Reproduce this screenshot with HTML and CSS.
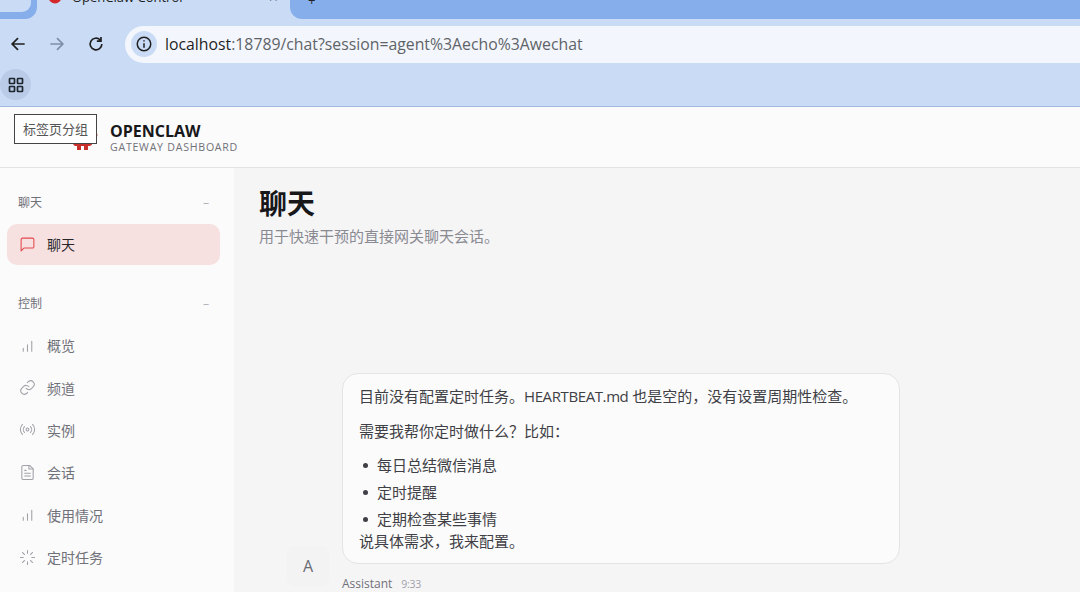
FILE: index.html
```html
<!DOCTYPE html>
<html lang="zh-CN">
<head>
<meta charset="utf-8">
<title>OpenClaw Control</title>
<link rel="stylesheet" href="styles.css">
</head>
<body>
<div class="browser">
  <div class="tabstrip">
    <div class="corner-tab"><div class="corner-inner"></div></div>
    <div class="active-tab">
      <svg class="favicon" viewBox="0 0 16 16"><circle cx="8" cy="8" r="6.500" fill="#d5282b"/></svg>
      <span class="tab-title">OpenClaw Control</span>
      <span class="tab-close">×</span>
    </div>
    <div class="other-tab"><span class="tab-plus">+</span></div>
  </div>
  <div class="toolbar">
    <button class="nav-btn"><svg viewBox="0 0 24 24" class="nav-ico"><path d="M20 12H5M12 5l-7 7 7 7"/></svg></button>
    <button class="nav-btn dim"><svg viewBox="0 0 24 24" class="nav-ico"><path d="M4 12h15M12 5l7 7-7 7"/></svg></button>
    <button class="nav-btn"><svg viewBox="0 0 24 24" class="nav-ico"><path d="M19 12a7 7 0 1 1-2.100-5M18 3.500V8.500H13"/></svg></button>
    <div class="omnibox">
      <span class="site-info"><svg viewBox="0 0 24 24" class="info-ico"><circle cx="12" cy="12" r="9"/><path d="M12 11v6M12 7v1.600"/></svg></span>
      <span class="url"><span class="host">localhost</span>:18789/chat?session=agent%3Aecho%3Awechat</span>
    </div>
  </div>
  <div class="bookmarks">
    <span class="group-btn"><svg viewBox="0 0 16 16" class="grid-ico"><rect x="1.500" y="1.500" width="5" height="5" rx=".6"/><rect x="9.500" y="1.500" width="5" height="5" rx=".6"/><rect x="1.500" y="9.500" width="5" height="5" rx=".6"/><rect x="9.500" y="9.500" width="5" height="5" rx=".6"/></svg></span>
  </div>
</div>
<header class="topbar">
  <svg class="logo" viewBox="0 0 30 30"><path d="M4 10C4 5 9 2 15 2s11 3 11 8v8c0 3-2 6-4 7l-2 0v4h-4v-4h-3v4H9v-4l-2 0c-2-1-3-4-3-7z" fill="#c9302c"/><circle cx="28.500" cy="14" r="1.500" fill="#e8a5a3"/></svg>
  <div class="brand">
    <div class="brand-name">OPENCLAW</div>
    <div class="brand-sub">GATEWAY DASHBOARD</div>
  </div>
  <div class="tooltip">标签页分组</div>
</header>
<div class="shell">
  <aside class="sidebar">
    <div class="nav-group first"><span>聊天</span><span class="minus">−</span></div>
    <a class="nav-item active">
      <svg viewBox="0 0 24 24" class="ico"><path d="M21 15a2 2 0 0 1-2 2H7l-4 4V5a2 2 0 0 1 2-2h14a2 2 0 0 1 2 2z"/></svg>
      <span>聊天</span>
    </a>
    <div class="nav-group"><span>控制</span><span class="minus">−</span></div>
    <a class="nav-item"><svg viewBox="0 0 24 24" class="ico"><path d="M18 20V6M12 20v-9M6 20v-4"/></svg><span>概览</span></a>
    <a class="nav-item"><svg viewBox="0 0 24 24" class="ico"><path d="M10 13a5 5 0 0 0 7.500.5l3-3a5 5 0 0 0-7-7l-1.700 1.700"/><path d="M14 11a5 5 0 0 0-7.500-.5l-3 3a5 5 0 0 0 7 7l1.700-1.700"/></svg><span>频道</span></a>
    <a class="nav-item"><svg viewBox="0 0 24 24" class="ico"><path d="M4.900 19.100a10 10 0 0 1 0-14.200M7.800 16.200a6 6 0 0 1 0-8.400M16.200 7.800a6 6 0 0 1 0 8.400M19.100 4.900a10 10 0 0 1 0 14.200"/><circle cx="12" cy="12" r="2"/></svg><span>实例</span></a>
    <a class="nav-item"><svg viewBox="0 0 24 24" class="ico"><path d="M15 2H6a2 2 0 0 0-2 2v16a2 2 0 0 0 2 2h12a2 2 0 0 0 2-2V7z"/><path d="M14 2v5h6M16 13H8M16 17H8M10 9H8"/></svg><span>会话</span></a>
    <a class="nav-item"><svg viewBox="0 0 24 24" class="ico"><path d="M18 20V6M12 20v-9M6 20v-4"/></svg><span>使用情况</span></a>
    <a class="nav-item"><svg viewBox="0 0 24 24" class="ico"><path d="M12 2v4M12 18v4M4.900 4.900l2.900 2.900M16.200 16.200l2.900 2.900M2 12h4M18 12h4M4.900 19.100l2.900-2.900M16.200 7.800l2.900-2.900"/></svg><span>定时任务</span></a>
  </aside>
  <main class="content">
    <h1 class="page-title">聊天</h1>
    <p class="page-sub">用于快速干预的直接网关聊天会话。</p>
    <div class="chat-group">
      <div class="avatar">A</div>
      <div class="chat-col">
        <div class="bubble">
          <p class="first-p">目前没有配置定时任务。<span class="latin">HEARTBEAT.md</span> 也是空的&#xFF0C;没有设置周期性检查。</p>
          <p>需要我帮你定时做什么&#xFF1F;比如&#xFF1A;</p>
          <ul>
            <li>每日总结微信消息</li>
            <li>定时提醒</li>
            <li>定期检查某些事情</li>
          </ul>
          <p class="last">说具体需求&#xFF0C;我来配置。</p>
        </div>
        <div class="meta"><span class="sender">Assistant</span><span class="time">9:33</span></div>
      </div>
    </div>
  </main>
</div>
</body>
</html>
```
FILE: styles.css
```css
* { box-sizing: border-box; }
html, body { margin: 0; height: 592px; overflow: hidden; }
body {
  font-family: "Open Sans", "Noto Sans CJK SC", sans-serif;
  background: #f5f5f6;
  color: #3f3f46;
  position: relative;
}
.browser { background: #cadbf6; height: 107px; border-bottom: 1px solid #a3b8da; }
.tabstrip { height: 25px; display: flex; overflow: hidden; }
.corner-tab { width: 37px; height: 19px; background: #85aeea; border-radius: 0 0 12px 0; }
.corner-inner { width: 31px; height: 12px; background: #cadbf6; border-radius: 0 0 9px 0; }
.active-tab { width: 253px; display: flex; align-items: flex-end; height: 5px; padding-left: 10px; gap: 9px; font-size: 13px; color: #222; line-height: 16px; }
.favicon { width: 16px; height: 16px; flex: none; }
.tab-title { flex: 1; }
.tab-close { font-size: 16px; margin-right: 12px; }
.other-tab { flex: 1; height: 19px; background: #85aeea; border-radius: 0 0 0 12px; padding-left: 18px; font-size: 13px; line-height: 0; }
.tab-plus { color: #222; }
.toolbar { height: 38px; display: flex; align-items: center; padding-left: 5px; }
.nav-btn { width: 26px; height: 26px; padding: 0; border: 0; background: none; margin-right: 13px; display: flex; align-items: center; justify-content: center; }
.nav-btn:nth-child(3) { margin-right: 16px; }
.nav-btn.dim .nav-ico { stroke: #7f8ea6; }
.nav-ico { width: 20px; height: 20px; fill: none; stroke: #1f1f1f; stroke-width: 2; }
.omnibox { flex: 1; height: 37px; background: #f3f7fd; border-radius: 19px 0 0 19px; display: flex; align-items: center; padding-left: 6px; gap: 8px; }
.site-info { width: 26px; height: 26px; border-radius: 50%; background: #cadbf6; display: flex; align-items: center; justify-content: center; }
.info-ico { width: 18px; height: 18px; fill: none; stroke: #1f1f1f; stroke-width: 2; }
.url { font-size: 15.8px; color: #5f6368; white-space: nowrap; }
.host { color: #1f1f1f; }
.bookmarks { height: 43px; padding: 6px 0 0; }
.group-btn { width: 31px; height: 31px; border-radius: 50%; background: #b9cbe6; display: flex; align-items: center; justify-content: center; }
.grid-ico { width: 16px; height: 16px; fill: none; stroke: #1f2630; stroke-width: 1.7; }
.topbar { height: 61px; background: #fbfbfb; border-bottom: 1px solid #e4e4e7; display: flex; align-items: center; padding: 0 0 0 68px; gap: 12px; position: relative; }
.logo { width: 30px; height: 30px; flex: none; margin-top: -2px; }
.brand { margin-top: 3px; }
.brand-name { font-size: 16px; font-weight: 700; color: #18181b; line-height: 16px; }
.brand-sub { font-size: 10.6px; color: #71717a; line-height: 14px; letter-spacing: 0.75px; margin-top: 1px; }
.tooltip { position: absolute; left: 14px; top: 7px; width: 83px; height: 30px; background: #fff; border: 1px solid #444; font-size: 13px; line-height: 28px; text-align: center; color: #555; }
.shell { display: flex; height: 424px; }
.sidebar { width: 234px; flex: none; background: #fbfbfb; padding: 0 14px 0 7px; }
.nav-group { display: flex; justify-content: space-between; align-items: center; height: 20px; padding: 0 11px; margin: 28px 0 11px; font-size: 12px; color: #71717a; }
.nav-group.first { margin-top: 24px; margin-bottom: 12px; }
.minus { color: #a1a1aa; font-size: 11px; }
.nav-item { display: flex; align-items: center; gap: 11px; height: 42.4px; padding-left: 12px; font-size: 14px; color: #71717a; }
.nav-item.active { height: 41px; padding-bottom: 1px; background: #f6e0e0; border-radius: 10px; color: #27272a; }
.nav-item.active .ico { stroke: #e5484d; }
.ico { width: 17px; height: 17px; flex: none; fill: none; stroke: #a1a1aa; stroke-width: 1.5; stroke-linecap: round; stroke-linejoin: round; }
.content { flex: 1; padding: 19px 0 0 25px; min-width: 0; }
.page-title { margin: 0; font-size: 28px; line-height: 32px; font-weight: 700; color: #18181b; }
.page-sub { margin: 6px 0 0; font-size: 15px; line-height: 22px; color: #8a8a92; }
.chat-group { display: flex; align-items: flex-end; margin: 126px 0 0 28px; gap: 13px; }
.avatar { width: 42px; height: 40px; flex: none; background: #f3f3f4; color: #6b6b73; font-size: 16px; display: flex; align-items: center; justify-content: center; margin-bottom: 7px; border-radius: 8px; }
.chat-col { width: 558px; }
.bubble { height: 191px; background: #fbfbfb; border: 1px solid #e4e4e7; border-radius: 16px; padding: 10px 16px 0; font-size: 15px; line-height: 24px; color: #3f3f46; }
.bubble p { margin: 0 0 10px; }
.bubble p.first-p { margin-bottom: 11px; }
.bubble p.last { margin: 0; line-height: 20px; }
.latin { letter-spacing: -0.4px; }
.bubble ul { margin: 0; padding: 0 0 0 4px; list-style: none; }
.bubble li { display: flex; align-items: center; gap: 9px; height: 24px; margin-bottom: 3px; }
.bubble li::before { content: ""; width: 5px; height: 5px; border-radius: 50%; background: #3f3f46; flex: none; }
.bubble li:last-child { margin-bottom: 0; }
.meta { margin-top: 11px; display: flex; gap: 9px; align-items: baseline; line-height: 18px; }
.sender { font-size: 12px; color: #71717a; }
.time { font-size: 10.5px; color: #a1a1aa; letter-spacing: -0.3px; }
```
